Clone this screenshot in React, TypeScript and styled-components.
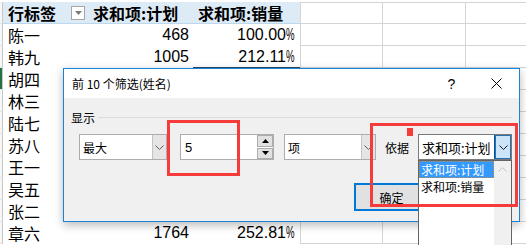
import React from 'react';
import styled, { createGlobalStyle } from 'styled-components';

const CJK = `"Noto Sans CJK SC", "Liberation Sans", sans-serif`;
const NUM = `"Liberation Sans", "Noto Sans CJK SC", sans-serif`;

const GlobalStyle = createGlobalStyle`
  html, body {
    margin: 0;
    padding: 0;
    background: #fff;
  }
  body {
    font-family: ${CJK};
  }
`;

const Sheet = styled.div`
  position: relative;
  width: 526px;
  height: 245px;
  overflow: hidden;
  padding-top: 2px;
  box-sizing: border-box;
  background: #fff;
`;

const Row = styled.div`
  display: flex;
  height: 22px;
`;

const RowHead = styled.div<{ $active?: boolean }>`
  width: 3px;
  flex: none;
  box-sizing: border-box;
  border-right: 1px solid #c8c8c8;
  border-bottom: 1px solid #e4e4e4;
  background: ${p => (p.$active ? '#217346' : '#f6f6f6')};
`;

const PivotCell = styled.div<{
  $w: number;
  $head?: boolean;
  $num?: boolean;
  $padRight?: number;
  $underline?: boolean;
}>`
  width: ${p => p.$w}px;
  flex: none;
  box-sizing: border-box;
  display: flex;
  align-items: center;
  justify-content: ${p => (p.$num ? 'flex-end' : 'space-between')};
  padding: 1px ${p => p.$padRight ?? 3}px 0 5px;
  background: ${p => (p.$head ? '#ddebf7' : '#fff')};
  border-bottom: 1px solid
    ${p => (p.$head ? '#bdd7ee' : p.$underline ? '#2b4a66' : 'transparent')};
  font-family: ${p => (p.$num ? NUM : CJK)};
  font-size: 16px;
  font-weight: ${p => (p.$head ? 700 : 400)};
  color: #000;
  white-space: nowrap;
`;

const Pct = styled.span`
  display: inline-block;
  width: 9px;
  transform: scaleX(0.6);
  transform-origin: left center;
`;

const FilterButton = styled.div`
  width: 14px;
  height: 14px;
  box-sizing: border-box;
  border: 1px solid #a6a6a6;
  background: #fff;
  display: flex;
  align-items: center;
  justify-content: center;
`;

const GridCell = styled.div<{ $w: number; $top?: boolean }>`
  width: ${p => p.$w}px;
  flex: none;
  box-sizing: border-box;
  border-left: 1px solid #d4d4d4;
  border-bottom: 1px solid #d4d4d4;
  ${p => (p.$top ? 'box-shadow: inset 0 1px 0 #d4d4d4;' : '')}
`;

/* dialog */

const Dialog = styled.div`
  position: absolute;
  left: 63px;
  top: 68px;
  width: 457px;
  height: 154px;
  box-sizing: border-box;
  border: 1px solid #1883d7;
  background: #f0f0f0;
  display: flex;
  flex-direction: column;
  box-shadow: 0 3px 9px rgba(0, 0, 0, 0.28);
  font-family: ${CJK};
  font-size: 12px;
  color: #000;
`;

const TitleBar = styled.div`
  flex: none;
  height: 29px;
  background: #fff;
  display: flex;
  align-items: center;
`;

const Title = styled.div`
  flex: 1;
  padding-left: 8px;
`;

const TitleButton = styled.div`
  width: 45px;
  height: 29px;
  display: flex;
  align-items: center;
  justify-content: center;
  font-family: ${NUM};
  font-size: 14px;
`;

const Body = styled.div`
  flex: 1;
  display: flex;
  flex-direction: column;
  padding: 9px 7px 0 7px;
`;

const GroupHeader = styled.div`
  display: flex;
  align-items: center;
  height: 20px;
`;

const GroupRule = styled.div`
  flex: 1;
  height: 1px;
  margin-left: 3px;
  background: #dcdcdc;
`;

const ControlRow = styled.div`
  display: flex;
  align-items: center;
  height: 26px;
  margin: 7px 0 0 8px;
`;

const Combo = styled.div<{ $w: number; $gap?: number; $focus?: boolean }>`
  width: ${p => p.$w}px;
  height: 26px;
  flex: none;
  margin-left: ${p => p.$gap ?? 0}px;
  box-sizing: border-box;
  display: flex;
  border: 1px solid ${p => (p.$focus ? '#7a7a7a' : '#adadad')};
  background: #fff;
`;

const ComboText = styled.div<{ $size?: number }>`
  flex: 1;
  display: flex;
  align-items: center;
  padding-left: 3px;
  font-size: ${p => p.$size ?? 12}px;
`;

const ComboButton = styled.div<{ $focus?: boolean }>`
  width: ${p => (p.$focus ? 17 : 14)}px;
  display: flex;
  align-items: center;
  justify-content: center;
  box-sizing: border-box;
  background: ${p => (p.$focus ? '#cce4f7' : '#e5e5e5')};
  border-left: 1px solid ${p => (p.$focus ? '#005499' : '#c4c4c4')};
  ${p => (p.$focus ? 'box-shadow: inset 0 0 0 1px #2a6fb0;' : '')}
`;

const Spin = styled.div`
  width: 94px;
  height: 26px;
  flex: none;
  margin-left: 13px;
  box-sizing: border-box;
  display: flex;
  border: 1px solid #adadad;
  background: #fff;
`;

const SpinText = styled.div`
  flex: 1;
  display: flex;
  align-items: center;
  padding-left: 4px;
  font-family: ${NUM};
  font-size: 13px;
`;

const SpinButtons = styled.div`
  width: 16px;
  display: flex;
  flex-direction: column;
  gap: 1px;
`;

const SpinButton = styled.div`
  flex: 1;
  box-sizing: border-box;
  border: 1px solid #adadad;
  background: #e1e1e1;
  display: flex;
  align-items: center;
  justify-content: center;
`;

const Label = styled.div`
  width: 24px;
  margin: 0 9px;
  flex: none;
`;

const ButtonRow = styled.div`
  display: flex;
  margin: 23px 0 0 283px;
`;

const OkButton = styled.div`
  width: 75px;
  height: 28px;
  box-sizing: border-box;
  border: 2px solid #0078d7;
  background: #e1e1e1;
  display: flex;
  align-items: center;
  justify-content: center;
`;

/* dropdown list of the 依据 combo */

const ListPopup = styled.div`
  position: absolute;
  left: 418px;
  top: 160px;
  width: 94px;
  height: 92px;
  box-sizing: border-box;
  border: 1px solid #646464;
  background: #fff;
  display: flex;
  font-family: ${CJK};
  font-size: 12px;
`;

const ListItems = styled.div`
  flex: 1;
  display: flex;
  flex-direction: column;
`;

const ListItem = styled.div<{ $selected?: boolean }>`
  height: 17px;
  box-sizing: border-box;
  display: flex;
  align-items: center;
  padding-left: 2px;
  color: ${p => (p.$selected ? '#fff' : '#000')};
  background: ${p => (p.$selected ? '#3399ff' : 'transparent')};
  outline: ${p => (p.$selected ? '1px dotted #c88a3c' : 'none')};
  outline-offset: -1px;
`;

const ScrollTrack = styled.div`
  width: 17px;
  background: #f0f0f0;
  display: flex;
  justify-content: center;
  padding-top: 6px;
  box-sizing: border-box;
`;

/* red annotation boxes drawn over the screenshot */

const Mark = styled.div<{ $x: number; $y: number; $w: number; $h: number; $fill?: boolean }>`
  position: absolute;
  left: ${p => p.$x}px;
  top: ${p => p.$y}px;
  width: ${p => p.$w}px;
  height: ${p => p.$h}px;
  box-sizing: border-box;
  border: 3px solid #f63b3b;
  background: ${p => (p.$fill ? '#f63b3b' : 'transparent')};
`;

const Chevron = ({ color = '#606060', up = false }: { color?: string; up?: boolean }) => (
  <svg width="9" height="5" viewBox="0 0 9 5">
    <polyline
      points={up ? '0.5,4.5 4.5,0.5 8.5,4.5' : '0.5,0.5 4.5,4.5 8.5,0.5'}
      fill="none"
      stroke={color}
      strokeWidth="1"
    />
  </svg>
);

const Triangle = ({ up = false, color = '#000' }: { up?: boolean; color?: string }) => (
  <svg width="7" height="4" viewBox="0 0 7 4">
    <polygon points={up ? '3.5,0 7,4 0,4' : '0,0 7,0 3.5,4'} fill={color} />
  </svg>
);

interface SheetRow {
  name: string;
  plan?: string;
  pct?: string;
}

const rows: SheetRow[] = [
  { name: '陈一', plan: '468', pct: '100.00' },
  { name: '韩九', plan: '1005', pct: '212.11' },
  { name: '胡四' },
  { name: '林三' },
  { name: '陆七' },
  { name: '苏八' },
  { name: '王一' },
  { name: '吴五' },
  { name: '张二' },
  { name: '章六', plan: '1764', pct: '252.81' },
];

const gridCols = [82, 83, 61];

export default function App() {
  return (
    <>
      <GlobalStyle />
      <Sheet>
        <Row>
          <RowHead />
          <PivotCell $w={85} $head>
            行标签
            <FilterButton>
              <Triangle color="#7a7a7a" />
            </FilterButton>
          </PivotCell>
          <PivotCell $w={105} $head>求和项:计划</PivotCell>
          <PivotCell $w={107} $head>求和项:销量</PivotCell>
          {gridCols.map((w, i) => (
            <GridCell key={i} $w={w} $top />
          ))}
        </Row>
        {rows.map((r, idx) => (
          <Row key={r.name}>
            <RowHead $active={idx === 2} />
            <PivotCell $w={85}>{r.name}</PivotCell>
            <PivotCell $w={105} $num $padRight={4}>
              {r.plan}
            </PivotCell>
            <PivotCell $w={107} $num $padRight={5} $underline={idx === 1}>
              {r.pct && (
                <>
                  {r.pct}
                  <Pct>%</Pct>
                </>
              )}
            </PivotCell>
            {gridCols.map((w, i) => (
              <GridCell key={i} $w={w} />
            ))}
          </Row>
        ))}

        <Dialog>
          <TitleBar>
            <Title>前 10 个筛选(姓名)</Title>
            <TitleButton>?</TitleButton>
            <TitleButton>
              <svg width="11" height="11" viewBox="0 0 11 11">
                <path d="M0.5 0.5 L10.5 10.5 M10.5 0.5 L0.5 10.5" stroke="#000" strokeWidth="1" />
              </svg>
            </TitleButton>
          </TitleBar>
          <Body>
            <GroupHeader>
              显示
              <GroupRule />
            </GroupHeader>
            <ControlRow>
              <Combo $w={88}>
                <ComboText>最大</ComboText>
                <ComboButton>
                  <Chevron />
                </ComboButton>
              </Combo>
              <Spin>
                <SpinText>5</SpinText>
                <SpinButtons>
                  <SpinButton>
                    <Triangle up />
                  </SpinButton>
                  <SpinButton>
                    <Triangle />
                  </SpinButton>
                </SpinButtons>
              </Spin>
              <Combo $w={92} $gap={10}>
                <ComboText>项</ComboText>
                <ComboButton>
                  <Chevron />
                </ComboButton>
              </Combo>
              <Label>依据</Label>
              <Combo $w={94} $focus>
                <ComboText $size={13}>求和项:计划</ComboText>
                <ComboButton $focus>
                  <Chevron color="#1a1a1a" />
                </ComboButton>
              </Combo>
            </ControlRow>
            <ButtonRow>
              <OkButton>确定</OkButton>
            </ButtonRow>
          </Body>
        </Dialog>

        <ListPopup>
          <ListItems>
            <ListItem $selected>求和项:计划</ListItem>
            <ListItem>求和项:销量</ListItem>
          </ListItems>
          <ScrollTrack>
            <Chevron up color="#c2c2c2" />
          </ScrollTrack>
        </ListPopup>

        <Mark $x={167} $y={120} $w={73} $h={56} />
        <Mark $x={370} $y={123} $w={148} $h={84} />
        <Mark $x={407} $y={128} $w={6} $h={8} $fill />
      </Sheet>
    </>
  );
}
